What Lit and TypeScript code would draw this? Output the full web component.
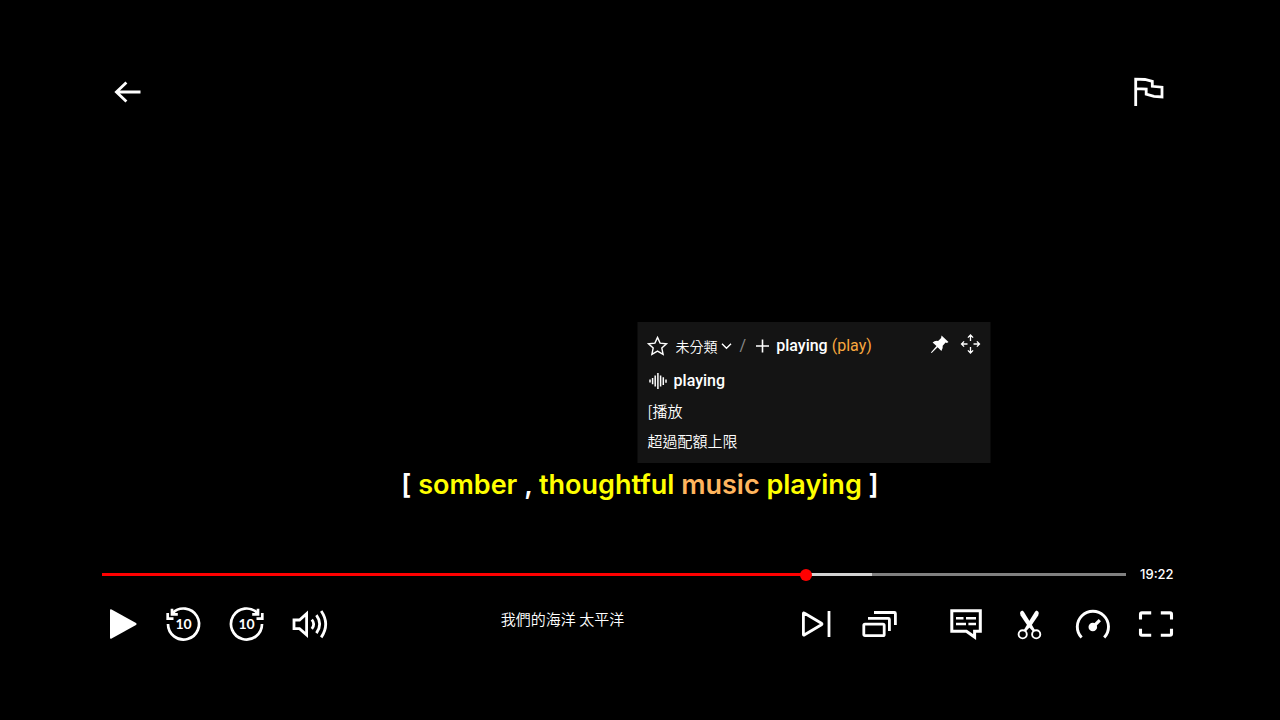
import { LitElement, html, svg, css } from "lit";
import { customElement, property, state } from "lit/decorators.js";

const line = (d: string, width = 3) => svg`<path d=${d} fill="none" stroke="currentColor" stroke-width=${width}></path>`;
const solid = (d: string) => svg`<path d=${d} fill="currentColor"></path>`;
const ring = (x: number, y: number, r: number, width: number) =>
  svg`<circle cx=${x} cy=${y} r=${r} fill="none" stroke="currentColor" stroke-width=${width}></circle>`;

const ICONS: Record<string, { size: number; art: unknown }> = {
  back: { size: 36, art: line("M6 18H30.5M16.4 8.4L6.4 18L16.4 27.6", 2.8) },
  flag: { size: 36, art: line("M5.7 32V5.2L15 5.5L22.3 7.3V12.3L32 13.2V22.9L24 22.3L16.2 20.2V15L5.7 14.6", 2.8) },
  play: { size: 36, art: solid("M8 4.2Q8 2.6 9.6 3.4L34 17Q35.4 18 34 19L9.6 32.6Q8 33.4 8 31.8Z") },
  rewind: {
    size: 36,
    art: svg`${line("M3 18A15.5 15.5 0 1 0 7.4 7.2", 2.7)}${line("M7 2.8V8.3H12.8M2.7 6.9V12.7H8.5", 2.7)}
      <text x="18.5" y="23.4" text-anchor="middle" class="ten">10</text>`,
  },
  forward: {
    size: 36,
    art: svg`${line("M34 18A15.5 15.5 0 1 1 29.6 7.2", 2.7)}${line("M30 2.8V8.3H24.2M34.3 6.9V12.7H28.5", 2.7)}
      <text x="18.5" y="23.4" text-anchor="middle" class="ten">10</text>`,
  },
  volume: {
    size: 36,
    art: line("M3 14H8.5L15.6 7.6V28.8L8.5 22.6H3ZM20.8 13.6Q24.6 18.2 20.8 22.8M25.4 9.2Q32 18.2 25.4 27.2M30.2 5Q39.2 18.2 30.2 31.4", 2.8),
  },
  next: { size: 36, art: line("M5.4 7.6Q5.4 6.4 6.6 7.2L23.4 17.2Q24.6 18 23.4 18.8L6.6 28.8Q5.4 29.6 5.4 28.4ZM31 5V31", 2.8) },
  episodes: {
    size: 36,
    art: line("M4 18.2H22Q23.2 18.2 23.2 19.4V28.4Q23.2 29.6 22 29.6H4Q2.8 29.6 2.8 28.4V19.4Q2.8 18.2 4 18.2ZM7 12.4H27.4Q28.4 12.4 28.4 13.4V25M13 6.5H33.4Q34.4 6.5 34.4 7.5V19", 2.8),
  },
  captions: {
    size: 36,
    art: svg`${line("M2.8 4.8H31.3V25.2H25.6V31L17.4 25.2H2.8Z", 3)}${line("M7 12.3H14.5M17 12.3H27M7 18H17M19.4 18H27", 2.5)}`,
  },
  scissors: {
    size: 36,
    art: svg`${solid("M8 7Q8.2 5 10.2 4.4L11.6 5.4L19.4 18L23.2 24.4L21.2 25.8L15.4 19.4L8.6 9.4Z")}
      ${solid("M26.8 7Q26.6 5 24.6 4.4L23.2 5.4L15.4 18L11.6 24.4L13.6 25.8L19.4 19.4L26.2 9.4Z")}
      ${ring(10.7, 28.3, 4.1, 1.9)}${ring(24.2, 28.3, 4.1, 1.9)}`,
  },
  speed: {
    size: 36,
    art: svg`${line("M6.6 31.6A15.6 15.6 0 1 1 29.2 31.6", 2.9)}${line("M18 21L24.8 14.2", 3.2)}<circle cx="17.8" cy="21" r="4.3" fill="currentColor"></circle>`,
  },
  fullscreen: { size: 36, art: line("M2.5 13.4V8.4Q2.5 6.9 4 6.9H13.2M22.8 6.9H32Q33.5 6.9 33.5 8.4V13.4M33.5 22.8V27.8Q33.5 29.3 32 29.3H22.8M13.2 29.3H4Q2.5 29.3 2.5 27.8V22.8", 3.1) },
  star: { size: 20, art: line("M10 1.4L12.6 7.1L19 7.8L14.3 12L15.6 18.3L10 15.1L4.4 18.3L5.7 12L1 7.8L7.4 7.1Z", 1.4) },
  plus: { size: 20, art: line("M10 3.5V16.5M3.5 10H16.5", 1.6) },
  wave: { size: 20, art: line("M2.5 8.6V11.6M5.1 7V13.2M7.7 4.6V15.6M10.4 2V18M13.1 4.6V15.6M15.8 6.2V14M18.5 8.4V11.8", 1.5) },
  pin: { size: 20, art: solid("M12 1.4L19 8L17.4 8.9L16.1 8.6L13.2 11.8Q13.7 14.4 11.9 16.9L8.1 13.2L2.2 19L1.4 18.4L7 12.1L3.1 8.4Q5.4 6.4 8.6 7L11.6 4Z") },
  move: {
    size: 20,
    art: line("M10 1.2V7M10 13V18.8M1.2 10H7M13 10H18.8M7.4 3.6L10 1L12.6 3.6M7.4 16.4L10 19L12.6 16.4M3.6 7.4L1 10L3.6 12.6M16.4 7.4L19 10L16.4 12.6", 1.3),
  },
};

@customElement("player-icon")
class PlayerIcon extends LitElement {
  @property() name = "";

  static styles = css`
    :host { display: block; flex: none; }
    svg { display: block; overflow: visible; }
    .ten { font: 700 14px Lato, "Liberation Sans", sans-serif; fill: currentColor; }
  `;

  render() {
    const icon = ICONS[this.name];
    return html`<svg width=${icon.size} height=${icon.size} viewBox="0 0 ${icon.size} ${icon.size}" aria-hidden="true">${icon.art}</svg>`;
  }
}

const buttonStyles = css`
  button {
    display: block;
    margin: 0;
    padding: 0;
    border: 0;
    background: none;
    color: inherit;
    font: inherit;
    cursor: pointer;
  }
`;

@customElement("word-card")
class WordCard extends LitElement {
  static styles = [
    buttonStyles,
    css`
      :host {
        display: block;
        box-sizing: border-box;
        width: 353px;
        padding: 10px 10px 7px;
        background: #141414;
        color: #fff;
        font: 400 16px/30px Roboto, "Noto Sans CJK TC", sans-serif;
        text-align: left;
      }
      .bar { display: flex; align-items: center; height: 28px; }
      .group { position: relative; display: flex; align-items: center; margin-left: 8px; }
      .group svg { position: absolute; right: 0; pointer-events: none; }
      select {
        appearance: none;
        width: 57px;
        margin: 0;
        padding: 0;
        border: 0;
        background: none;
        color: #fff;
        font: 350 14px/28px "Noto Sans CJK TC", sans-serif;
      }
      .slash { margin: 0 6px 0 7px; color: #8a8a8a; }
      .add { display: flex; align-items: center; gap: 4px; }
      .word { font-weight: 500; }
      .base { margin-left: 4px; color: #f9a83e; }
      .tools { display: flex; gap: 11px; margin: 0 0 4px auto; }
      .say { display: flex; align-items: center; gap: 6px; margin-top: 6px; }
      p { margin: 0; font: 350 15px/30px "Noto Sans CJK TC", sans-serif; }
    `,
  ];

  render() {
    return html`
      <div class="bar">
        <button aria-label="收藏"><player-icon name="star"></player-icon></button>
        <span class="group">
          <select aria-label="分類"><option>未分類</option></select>
          <svg width="12" height="12" viewBox="0 0 12 12" aria-hidden="true">
            <path d="M1.5 3.8L6 8.3L10.5 3.8" fill="none" stroke="currentColor" stroke-width="1.4"></path>
          </svg>
        </span>
        <span class="slash">/</span>
        <button class="add"><player-icon name="plus"></player-icon><span class="word">playing</span></button>
        <span class="base">(play)</span>
        <span class="tools">
          <button aria-label="固定"><player-icon name="pin"></player-icon></button>
          <button aria-label="移動"><player-icon name="move"></player-icon></button>
        </span>
      </div>
      <button class="say"><player-icon name="wave"></player-icon><span class="word">playing</span></button>
      <p>[播放</p>
      <p>超過配額上限</p>
    `;
  }
}

@customElement("app-root")
class AppRoot extends LitElement {
  @state() private played = 68.97;
  private buffered = 75.2;

  static styles = [
    buttonStyles,
    css`
      :host {
        display: flex;
        flex-direction: column;
        box-sizing: border-box;
        min-height: 100vh;
        padding: 74px 8% 78px;
        background: #000;
        color: #fff;
        font-family: Roboto, "Noto Sans CJK TC", sans-serif;
      }
      header { display: flex; justify-content: space-between; padding: 0 12px 0 8px; }
      main { flex: 1; display: flex; flex-direction: column; justify-content: flex-end; padding-bottom: 60px; }
      .caption { margin: 0; font: 600 27px/40px Inter, sans-serif; text-align: center; }
      .known { color: #ff0; }
      .learning { color: #ffb55e; }
      .active { position: relative; display: inline-block; }
      .active word-card { position: absolute; bottom: 42px; left: 50%; transform: translateX(-50%); }
      .timeline { display: flex; align-items: center; gap: 14px; height: 19px; padding-right: 4px; }
      .seek {
        appearance: none;
        flex: 1;
        min-width: 0;
        height: 11px;
        margin: 0;
        background: none;
      }
      .seek::-webkit-slider-runnable-track {
        height: 3px;
        background: linear-gradient(to right, #f00 var(--played), #d2d2d2 var(--played) var(--buffered), #808080 var(--buffered));
      }
      .seek::-webkit-slider-thumb {
        appearance: none;
        width: 12px;
        height: 12px;
        margin-top: -4px;
        border-radius: 50%;
        background: #f00;
      }
      .time { width: 34px; font: 500 13px/19px Inter, sans-serif; text-align: right; }
      .controls { display: flex; align-items: center; margin-top: 22px; padding-right: 4px; }
      .set { display: flex; gap: 27px; }
      .set + .set { margin-left: 52px; }
      .title {
        flex: 1;
        align-self: flex-start;
        margin: 0;
        font: 350 15px/26px "Noto Sans CJK TC", sans-serif;
        text-align: center;
      }
    `,
  ];

  private control(name: string, label: string) {
    return html`<button aria-label=${label}><player-icon name=${name}></player-icon></button>`;
  }

  render() {
    return html`
      <header>${this.control("back", "返回")}${this.control("flag", "回報")}</header>
      <main>
        <p class="caption">
          [ <span class="known">somber</span> , <span class="known">thoughtful</span>
          <span class="learning">music</span>
          <span class="known active">playing<word-card></word-card></span> ]
        </p>
      </main>
      <div class="timeline">
        <input class="seek" type="range" min="0" max="100" step="any" aria-label="進度"
          .value=${String(this.played)}
          style="--played:${this.played}%;--buffered:${this.buffered}%"
          @input=${(e: Event) => (this.played = Number((e.target as HTMLInputElement).value))} />
        <span class="time">19:22</span>
      </div>
      <div class="controls">
        <div class="set">
          ${this.control("play", "播放")}${this.control("rewind", "倒轉 10 秒")}
          ${this.control("forward", "快轉 10 秒")}${this.control("volume", "音量")}
        </div>
        <h1 class="title">我們的海洋 太平洋</h1>
        <div class="set">${this.control("next", "下一集")}${this.control("episodes", "集數")}</div>
        <div class="set">
          ${this.control("captions", "字幕")}${this.control("scissors", "剪輯")}
          ${this.control("speed", "速度")}${this.control("fullscreen", "全螢幕")}
        </div>
      </div>
    `;
  }
}
